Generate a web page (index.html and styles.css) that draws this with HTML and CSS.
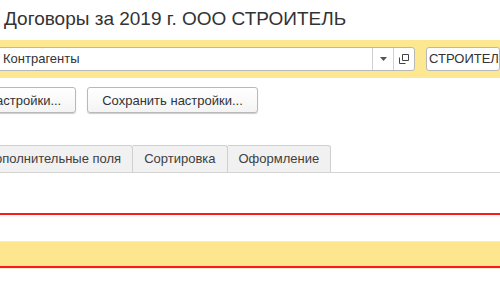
FILE: index.html
```html
<!DOCTYPE html>
<html lang="ru">
<head>
    <meta charset="UTF-8">
    <title>Договоры за 2019 г. ООО СТРОИТЕЛЬ</title>
    <link rel="stylesheet" href="styles.css">
</head>
<body>
    <div class="form">
        <div class="form-title">Договоры за 2019 г. ООО СТРОИТЕЛЬ</div>

        <div class="filter-bar">
            <div class="combo">
                <span class="combo-text">Контрагенты</span>
                <span class="combo-btn">
                    <svg width="7" height="4" viewBox="0 0 7 4"><path d="M0 0h7L3.5 4z" fill="#555"/></svg>
                </span>
                <span class="combo-btn">
                    <svg width="10" height="10" viewBox="0 0 10 10" fill="none" stroke="#444" stroke-width="1">
                        <path d="M3.5 0.5h6v6h-6z"/>
                        <path d="M0.5 3.5v6h6"/>
                    </svg>
                </span>
            </div>
            <div class="field">СТРОИТЕЛЬ</div>
        </div>

        <div class="button-row">
            <button class="btn btn-cut">Восстановить настройки...</button>
            <button class="btn">Сохранить настройки...</button>
        </div>

        <div class="tabs">
            <div class="tab tab-cut">Дополнительные поля</div>
            <div class="tab">Сортировка</div>
            <div class="tab">Оформление</div>
        </div>

        <div class="grid">
            <div class="grid-row first"></div>
            <div class="grid-row"></div>
            <div class="grid-row current"></div>
            <div class="grid-row"></div>
        </div>
    </div>
</body>
</html>
```

FILE: styles.css
```css
html, body {
    margin: 0;
    padding: 0;
    background-color: #fff;
}

body {
    width: 500px;
    height: 300px;
    overflow: hidden;
    font-family: 'Liberation Sans', Arial, sans-serif;
    color: #333;
}

.form {
    display: flex;
    flex-direction: column;
}

.form-title {
    height: 40px;
    padding-left: 4px;
    font-size: 19px;
    line-height: 38px;
    color: #333;
    white-space: nowrap;
}

.filter-bar {
    background-color: #fde891;
    height: 38px;
    padding: 7px 0;
    box-sizing: border-box;
    display: flex;
    align-items: stretch;
    gap: 11px;
}

.combo {
    width: 416px;
    margin-left: -3px;
    flex-shrink: 0;
    background-color: #fff;
    border: 1px solid #b8b8b8;
    border-radius: 3px;
    display: flex;
    align-items: stretch;
    font-size: 13px;
}

.combo-text {
    flex-grow: 1;
    padding-left: 5px;
    line-height: 22px;
    color: #333;
}

.combo-btn {
    width: 20px;
    border-left: 1px solid #d0d0d0;
    display: flex;
    justify-content: center;
    align-items: center;
}

.field {
    flex-grow: 1;
    background-color: #fff;
    border: 1px solid #b8b8b8;
    border-radius: 3px;
    padding-left: 2px;
    font-size: 13px;
    line-height: 22px;
    white-space: nowrap;
    overflow: hidden;
}

.button-row {
    display: flex;
    gap: 11px;
    margin-top: 9px;
    height: 26px;
}

.btn {
    font-family: 'Liberation Sans', Arial, sans-serif;
    font-size: 13px;
    color: #333;
    background: linear-gradient(#ffffff, #f4f4f4);
    border: 1px solid #b9b9b9;
    border-radius: 3px;
    box-shadow: 0 1px 1px rgba(0, 0, 0, 0.2);
    padding: 0 14px;
    height: 26px;
    white-space: nowrap;
    flex-shrink: 0;
}

.btn-cut {
    margin-left: -113px;
}

.tabs {
    display: flex;
    margin-top: 32px;
    height: 27px;
    border-bottom: 1px solid #d4d4d4;
}

.tab {
    font-size: 13px;
    color: #404040;
    background-color: #f1f1f1;
    border: 1px solid #cfcfcf;
    border-bottom: none;
    border-left: none;
    border-top-right-radius: 3px;
    padding: 0 11px;
    line-height: 26px;
    white-space: nowrap;
    flex-shrink: 0;
}

.tab-cut {
    margin-left: -25px;
}

.grid {
    display: flex;
    flex-direction: column;
}

.grid-row {
    height: 26px;
    border-bottom: 2px solid #ff1a1a;
}

.grid-row.first {
    height: 40px;
}

.grid-row:nth-child(2) {
    border-bottom: 1px solid #f3ecd0;
    height: 26px;
}

.grid-row.current {
    background-color: #fde68d;
    height: 24px;
    border-bottom: 2px solid #ff1a1a;
    box-shadow: 0 1px 0 #f6eed2;
}

.grid-row:last-child {
    border-bottom: none;
    height: 40px;
}
```
